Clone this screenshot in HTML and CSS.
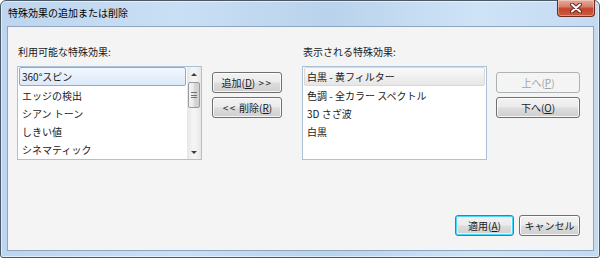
FILE: index.html
```html
<!DOCTYPE html>
<html lang="ja">
<head>
<meta charset="utf-8">
<title>特殊効果の追加または削除</title>
<link rel="stylesheet" href="styles.css">
</head>
<body>
<div class="window">
  <div class="titlebar">
    <span class="title">特殊効果の追加または削除</span>
    <div class="close">
      <svg width="14" height="10" viewBox="0 0 14 10"><path d="M3 1.5 L11 8.5 M11 1.5 L3 8.5" stroke="#5a2a22" stroke-width="4" stroke-linecap="round"/><path d="M3 1.5 L11 8.5 M11 1.5 L3 8.5" stroke="#ffffff" stroke-width="2" stroke-linecap="round"/></svg>
    </div>
  </div>
  <div class="client">
    <div class="main">
      <div class="col">
        <div class="label">利用可能な特殊効果:</div>
        <div class="listbox">
          <div class="items">
            <div class="item sel-focus">360°スピン</div>
            <div class="item">エッジの検出</div>
            <div class="item">シアン トーン</div>
            <div class="item">しきい値</div>
            <div class="item">シネマティック</div>
          </div>
          <div class="scrollbar">
            <div class="arrow up"></div>
            <div class="track">
              <div class="thumb"><span class="grip"></span></div>
            </div>
            <div class="arrow down"></div>
          </div>
        </div>
      </div>
      <div class="btncol mid">
        <div class="btn">追加(<u>D</u>)&nbsp;<span class="chev">&gt;&gt;</span></div>
        <div class="btn"><span class="chev">&lt;&lt;</span>&nbsp;削除(<u>R</u>)</div>
      </div>
      <div class="col">
        <div class="label">表示される特殊効果:</div>
        <div class="listbox">
          <div class="items">
            <div class="item sel-grey">白黒 - 黄フィルター</div>
            <div class="item">色調 - 全カラー スペクトル</div>
            <div class="item">3D さざ波</div>
            <div class="item">白黒</div>
          </div>
        </div>
      </div>
      <div class="btncol side">
        <div class="btn disabled">上へ(<u>P</u>)</div>
        <div class="btn">下へ(<u>O</u>)</div>
      </div>
    </div>
    <div class="footer">
      <div class="btn default apply">適用(<u>A</u>)</div>
      <div class="btn cancel">キャンセル</div>
    </div>
  </div>
</div>
</body>
</html>
```
FILE: styles.css
```css
* { box-sizing: border-box; }
html, body { margin: 0; padding: 0; }
body {
  width: 600px;
  height: 258px;
  background: #ffffff;
  font-family: "Noto Sans CJK JP", "Noto Sans", sans-serif;
  font-size: 10px;
  color: #1a1a1a;
  overflow: hidden;
}
.window {
  width: 600px;
  height: 258px;
  border: 1px solid #4b5866;
  border-radius: 6px 6px 3px 3px;
  background: linear-gradient(90deg, #bdd5ee 0%, #c9dff4 30%, #b9d3ec 55%, #cfe3f6 80%, #c3daf1 100%);
  display: flex;
  flex-direction: column;
  box-shadow: inset 0 0 0 1px rgba(255,255,255,0.55);
}
.titlebar {
  height: 25px;
  display: flex;
  align-items: flex-start;
  padding-left: 7px;
}
.title {
  line-height: 24px;
  color: #000;
}
.close {
  margin-left: auto;
  margin-right: 4px;
  margin-top: -1px;
  width: 38px;
  height: 17px;
  border: 1px solid #6e2a22;
  border-top: none;
  border-radius: 0 0 4px 4px;
  background: linear-gradient(180deg, #e9a899 0%, #d7826e 40%, #c2452e 55%, #cc5a3c 100%);
  display: flex;
  align-items: center;
  justify-content: center;
  box-shadow: inset 0 0 0 1px rgba(255,255,255,0.35);
}
.client {
  margin: 0 5px 6px 6px;
  flex: 1;
  background: #f4f4f4;
  border: 1px solid #8da5be;
  display: flex;
  flex-direction: column;
  padding: 18px 13px 14px 9px;
}
.main {
  display: flex;
  align-items: flex-start;
}
.col {
  width: 185px;
  display: flex;
  flex-direction: column;
}
.label {
  height: 14px;
  line-height: 14px;
  margin-bottom: 7px;
  padding-left: 1px;
}
.listbox {
  height: 94px;
  border: 1px solid #abc1d8;
  background: #fff;
  display: flex;
}
.items {
  flex: 1;
  padding: 0 1px;
}
.item {
  height: 18px;
  line-height: 18px;
  padding-left: 2px;
  border: 1px solid transparent;
  border-radius: 2px;
  white-space: nowrap;
}
.items .item:first-child { height: 19px; }
.sel-focus {
  border-color: #84acdd;
  background: linear-gradient(180deg, #f1f7fe 0%, #dce9f9 100%);
}
.sel-grey {
  border-color: #d9d9d9;
  background: linear-gradient(180deg, #fafafa 0%, #e6e6e6 100%);
}
.scrollbar {
  width: 14px;
  display: flex;
  flex-direction: column;
  background: linear-gradient(90deg, #e6e6e6 0%, #f4f4f4 40%, #f4f4f4 60%, #e6e6e6 100%);
}
.arrow {
  height: 14px;
  display: flex;
  align-items: center;
  justify-content: center;
}
.arrow::before {
  content: "";
  border-left: 3px solid transparent;
  border-right: 3px solid transparent;
}
.arrow.up::before { border-bottom: 3px solid #3c3c3c; }
.arrow.down::before { border-top: 3px solid #3c3c3c; }
.track {
  flex: 1;
  padding: 1px 1px 0;
}
.thumb {
  height: 26px;
  border: 1px solid #959ba3;
  border-radius: 2px;
  background: linear-gradient(90deg, #f3f3f3 0%, #e8e8e8 50%, #d6d6d6 51%, #d0d0d0 100%);
  display: flex;
  align-items: center;
  justify-content: center;
}
.grip {
  width: 6px;
  height: 6px;
  border-top: 1px solid #6d7278;
  border-bottom: 1px solid #6d7278;
}
.grip::after {
  content: "";
  display: block;
  margin-top: 1.5px;
  height: 1px;
  background: #6d7278;
}
.btncol {
  display: flex;
  flex-direction: column;
  gap: 4px;
  margin-top: 27px;
}
.btncol.mid { width: 70px; margin-left: 10px; margin-right: 20px; }
.btncol.side { width: 84px; margin-left: 9px; }
.btn {
  height: 21px;
  border: 1px solid #707070;
  border-radius: 3px;
  background: linear-gradient(180deg, #f2f2f2 0%, #ebebeb 48%, #dddddd 52%, #cfcfcf 100%);
  box-shadow: inset 0 0 0 1px rgba(255,255,255,0.8);
  display: flex;
  align-items: center;
  justify-content: center;
  white-space: nowrap;
  line-height: 1;
}
.chev { letter-spacing: 1.5px; margin-left: 1px; }
.btn u { text-underline-offset: 1px; }
.btn.disabled {
  border-color: #adb2b5;
  background: #f4f4f4;
  color: #a3a3a3;
  box-shadow: none;
}
.footer {
  margin-top: auto;
  display: flex;
  justify-content: flex-end;
  gap: 5px;
}
.apply { width: 59px; }
.cancel { width: 61px; }
.btn.default {
  border-color: #3c7fb1;
  box-shadow: inset 0 0 0 1px #48d8fb, inset 0 0 0 2px rgba(255,255,255,0.6);
}
```
